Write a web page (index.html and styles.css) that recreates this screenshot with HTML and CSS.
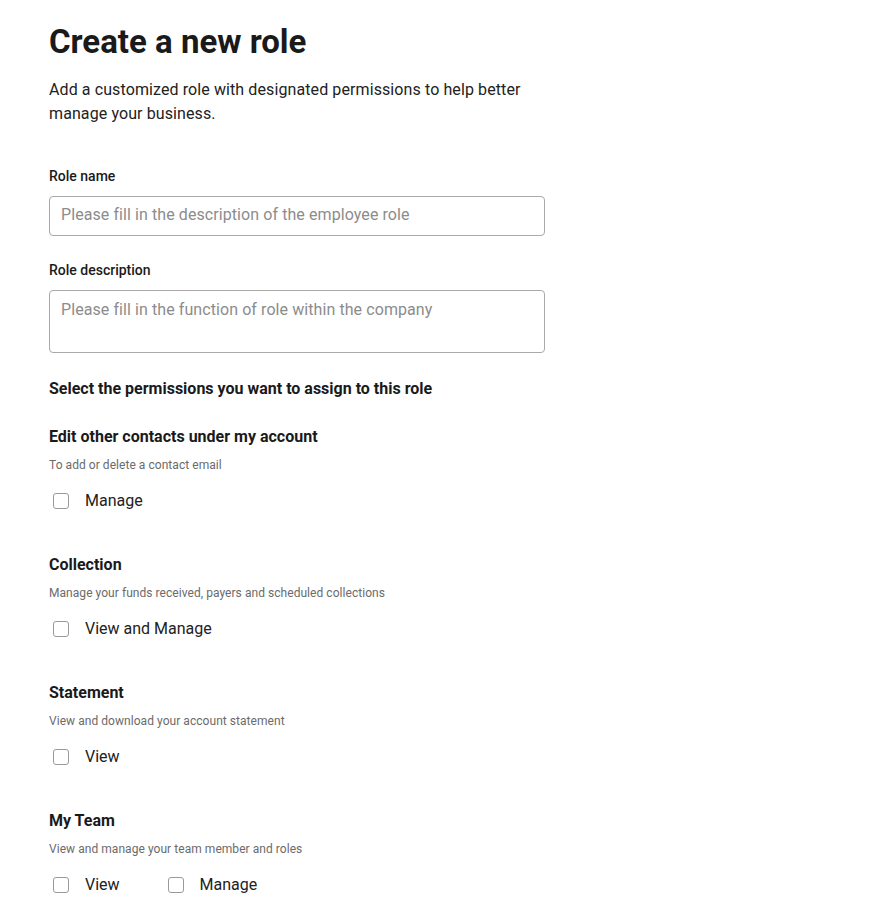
FILE: index.html
```html
<!DOCTYPE html>
<html lang="en">
<head>
<meta charset="utf-8">
<title>Create a new role</title>
<link rel="stylesheet" href="styles.css">
</head>
<body>
<main class="page">
  <h1 class="title">Create a new role</h1>
  <p class="intro">Add a customized role with designated permissions to help better manage your business.</p>

  <label class="field-label" for="role-name">Role name</label>
  <input class="text-input" id="role-name" type="text" placeholder="Please fill in the description of the employee role">

  <label class="field-label field-label--second" for="role-desc">Role description</label>
  <textarea class="text-area" id="role-desc" placeholder="Please fill in the function of role within the company"></textarea>

  <h2 class="section-title">Select the permissions you want to assign to this role</h2>

  <section class="perm">
    <h3 class="perm-title">Edit other contacts under my account</h3>
    <p class="perm-desc">To add or delete a contact email</p>
    <div class="options">
      <label class="option"><span class="box"></span><span class="option-text">Manage</span></label>
    </div>
  </section>

  <section class="perm">
    <h3 class="perm-title">Collection</h3>
    <p class="perm-desc">Manage your funds received, payers and scheduled collections</p>
    <div class="options">
      <label class="option"><span class="box"></span><span class="option-text">View and Manage</span></label>
    </div>
  </section>

  <section class="perm">
    <h3 class="perm-title">Statement</h3>
    <p class="perm-desc">View and download your account statement</p>
    <div class="options">
      <label class="option"><span class="box"></span><span class="option-text">View</span></label>
    </div>
  </section>

  <section class="perm">
    <h3 class="perm-title">My Team</h3>
    <p class="perm-desc">View and manage your team member and roles</p>
    <div class="options">
      <label class="option"><span class="box"></span><span class="option-text">View</span></label>
      <label class="option"><span class="box"></span><span class="option-text">Manage</span></label>
    </div>
  </section>
</main>
</body>
</html>
```

FILE: styles.css
```css
* { box-sizing: border-box; }

html, body {
  margin: 0;
  padding: 0;
  background: #ffffff;
}

body {
  font-family: Roboto, "Liberation Sans", Arial, sans-serif;
  color: #1a1a1a;
}

.page {
  width: 545px;
  padding: 22px 0 40px 49px;
  display: flex;
  flex-direction: column;
}

.title {
  margin: 0;
  font-size: 33px;
  line-height: 40px;
  font-weight: 700;
  color: #1a1a1a;
}

.intro {
  margin: 16px 0 0;
  font-size: 16px;
  line-height: 24px;
  color: #222;
  width: 480px;
  letter-spacing: 0.1px;
}

.field-label {
  margin-top: 40px;
  font-size: 14px;
  line-height: 20px;
  font-weight: 500;
  color: #1a1a1a;
}

.field-label--second {
  margin-top: 24px;
}

.text-input,
.text-area {
  margin-top: 10px;
  width: 496px;
  border: 1px solid #a9a9a9;
  border-radius: 4px;
  font-family: inherit;
  font-size: 16px;
  line-height: 20px;
  color: #222;
  padding: 0 11px;
  background: #fff;
  outline: none;
  letter-spacing: 0.08px;
}

.text-input {
  height: 40px;
  padding-bottom: 3px;
}

.text-area {
  height: 63px;
  padding-top: 9px;
  resize: none;
  display: block;
}

.text-input::placeholder,
.text-area::placeholder {
  color: #8c8c8c;
}

.section-title {
  margin: 24px 0 0;
  font-size: 16px;
  line-height: 24px;
  font-weight: 700;
  color: #1a1a1a;
}

.perm {
  margin-top: 24px;
}

.perm + .perm {
  margin-top: 40px;
}

.perm-title {
  margin: 0;
  font-size: 16px;
  line-height: 24px;
  font-weight: 700;
  color: #1a1a1a;
}

.perm-desc {
  margin: 8px 0 0;
  font-size: 12px;
  line-height: 16px;
  color: #6b6b6b;
  letter-spacing: 0.05px;
}

.options {
  margin-top: 16px;
  display: flex;
  gap: 44px;
}

.option {
  display: flex;
  align-items: center;
  height: 24px;
}

.box {
  width: 16px;
  height: 16px;
  margin-left: 4px;
  border: 1px solid #9a9a9a;
  border-radius: 3px;
  background: #fff;
}

.option-text {
  margin-left: 16px;
  font-size: 16px;
  line-height: 24px;
  color: #222;
}
```
